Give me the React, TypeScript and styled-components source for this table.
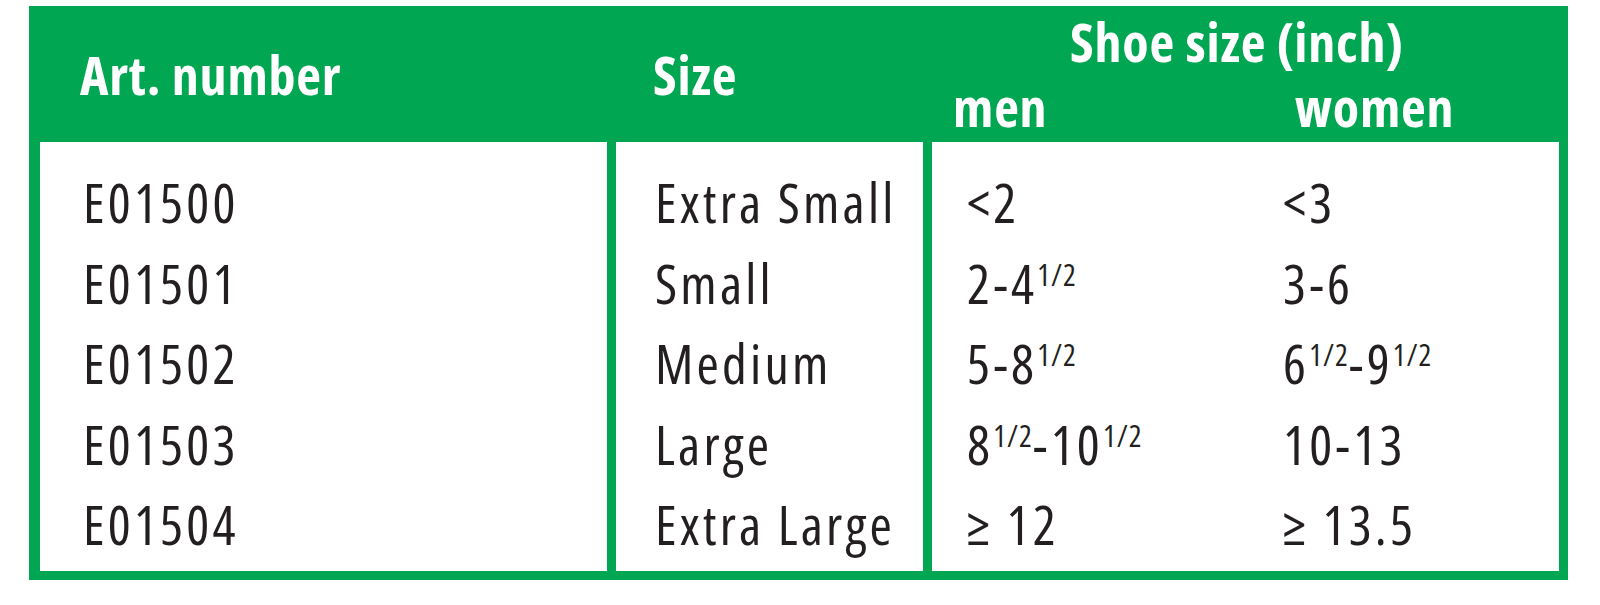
import { FC } from "react";
import styled, { createGlobalStyle } from "styled-components";

const GlobalStyle = createGlobalStyle`
  html, body {
    margin: 0;
    padding: 0;
    background: #fff;
  }
  body {
    font-family: "Open Sans", "Liberation Sans", sans-serif;
    font-stretch: 75%;
  }
`;

type Part = { whole: string; half?: boolean };

type Row = {
  art: string;
  size: string;
  men: Part[] | string;
  women: Part[] | string;
};

const rows: Row[] = [
  { art: "E01500", size: "Extra Small", men: "<2", women: "<3" },
  { art: "E01501", size: "Small", men: [{ whole: "2-4", half: true }], women: "3-6" },
  {
    art: "E01502",
    size: "Medium",
    men: [{ whole: "5-8", half: true }],
    women: [{ whole: "6", half: true }, { whole: "-9", half: true }],
  },
  {
    art: "E01503",
    size: "Large",
    men: [{ whole: "8", half: true }, { whole: "-10", half: true }],
    women: "10-13",
  },
  { art: "E01504", size: "Extra Large", men: "≥ 12", women: "≥ 13.5" },
];

const Shoe: FC<{ value: Part[] | string }> = ({ value }) => {
  if (typeof value === "string") return <>{value}</>;
  return (
    <>
      {value.map((part, i) => (
        <span key={i}>
          {part.whole}
          {part.half && <Sup>1/2</Sup>}
        </span>
      ))}
    </>
  );
};

export default function App() {
  return (
    <>
      <GlobalStyle />
      <Frame>
        <Header>
          <HeadCell pad={40}>Art. number</HeadCell>
          <HeadCell pad={37}>Size</HeadCell>
          <ShoeHead>
            <HeadLine pad={138}>Shoe size (inch)</HeadLine>
            <SubHead>
              <HeadLine pad={21}>men</HeadLine>
              <HeadLine pad={17}>women</HeadLine>
            </SubHead>
          </ShoeHead>
        </Header>
        <Body>
          <Column pad={43}>
            {rows.map(r => (
              <Cell key={r.art}>{r.art}</Cell>
            ))}
          </Column>
          <Column pad={39}>
            {rows.map(r => (
              <Cell key={r.art}>{r.size}</Cell>
            ))}
          </Column>
          <Column pad={0}>
            {rows.map(r => (
              <ShoeCell key={r.art}>
                <Value pad={35}>
                  <Shoe value={r.men} />
                </Value>
                <Value pad={0}>
                  <Shoe value={r.women} />
                </Value>
              </ShoeCell>
            ))}
          </Column>
        </Body>
      </Frame>
    </>
  );
}

const Frame = styled.div`
  margin: 6px 0 0 29px;
  width: 1539px;
  box-sizing: border-box;
  padding: 0 9px 9px 11px;
  background-color: #00a651;
`;

const Header = styled.div`
  display: grid;
  grid-template-columns: 567px 307px 1fr;
  column-gap: 9px;
  height: 136px;
  color: #fff;
  font-weight: 700;
  font-size: 54px;
  line-height: 65px;
  letter-spacing: 0.8px;
`;

const HeadCell = styled.div<{ pad: number }>`
  padding: 36px 0 0 ${p => p.pad}px;
  white-space: nowrap;
`;

const ShoeHead = styled.div`
  padding-top: 3px;
`;

const SubHead = styled.div`
  display: grid;
  grid-template-columns: 346px 1fr;
`;

const HeadLine = styled.div<{ pad: number }>`
  padding-left: ${p => p.pad}px;
  white-space: nowrap;
`;

const Body = styled.div`
  display: grid;
  grid-template-columns: 567px 307px 1fr;
  column-gap: 9px;
  height: 429px;
`;

const Column = styled.div<{ pad: number }>`
  background-color: #fff;
  padding: 20px 0 0 ${p => p.pad}px;
  color: #231f20;
  font-size: 54px;
  letter-spacing: 3.2px;
`;

const Cell = styled.div`
  height: 80.5px;
  line-height: 80px;
  white-space: nowrap;
`;

const ShoeCell = styled.div`
  display: grid;
  grid-template-columns: 351px 1fr;
  height: 80.5px;
  line-height: 80px;
`;

const Value = styled.div<{ pad: number }>`
  padding-left: ${p => p.pad}px;
  white-space: nowrap;
`;

const Sup = styled.span`
  font-size: 30px;
  line-height: 1;
  letter-spacing: 1px;
  vertical-align: 18px;
`;
